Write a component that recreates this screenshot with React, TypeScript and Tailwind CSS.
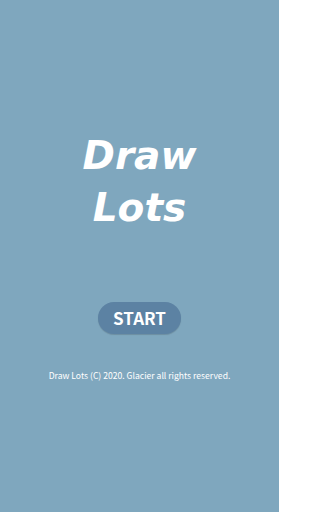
export default function App() {
  return (
    <div className="w-[279px] h-[512px] bg-[#7fa7be] flex flex-col items-center overflow-hidden">
      <div className="mt-[130px] text-white italic font-bold text-[39px] leading-[52px] text-center font-['DejaVu_Sans',sans-serif]">
        <div>Draw</div>
        <div>Lots</div>
      </div>
      <button className="mt-[68px] w-[83px] h-[32px] rounded-full bg-[#5c82a3] text-white font-bold text-[17px] flex items-center justify-center shadow-[0_1px_1px_rgba(0,0,0,0.15)] font-['Noto_Sans_CJK_KR','Noto_Sans',sans-serif]">
        START
      </button>
      <div className="mt-[35px] text-white text-[8.6px] leading-[12px] font-['Noto_Sans_CJK_KR','Noto_Sans',sans-serif]">
        Draw Lots (C) 2020. Glacier all rights reserved.
      </div>
    </div>
  );
}
